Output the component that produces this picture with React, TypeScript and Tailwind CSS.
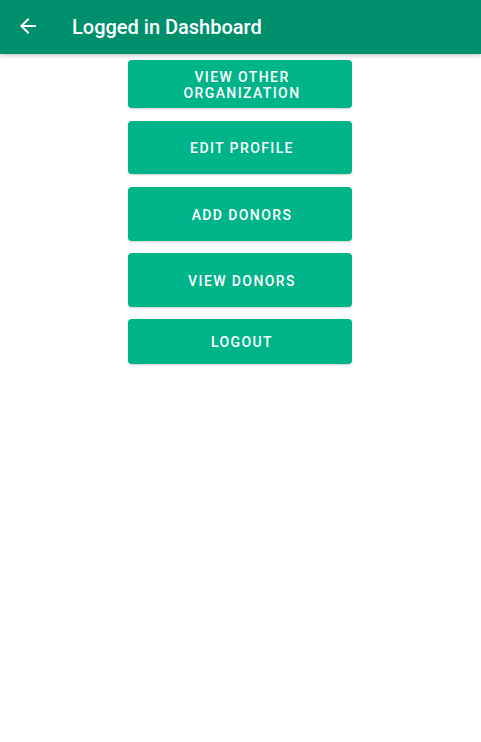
import React from 'react'

const buttons = [
  { label: 'View Other Organization', cls: 'h-[48px]' },
  { label: 'Edit Profile', cls: 'h-[53px] mt-[13px]' },
  { label: 'Add Donors', cls: 'h-[54px] mt-[13px]' },
  { label: 'View Donors', cls: 'h-[54px] mt-[12px]' },
  { label: 'Logout', cls: 'h-[45px] mt-[12px]' },
]

export default function App() {
  return (
    <div className="min-h-[742px] w-[481px] bg-white font-['Roboto',sans-serif]">
      {/* toolbar */}
      <div className="flex h-[54px] items-center bg-[#008f6d] shadow-[0_2px_4px_rgba(0,0,0,0.2)]">
        <div className="flex w-[56px] justify-center">
          <svg width="24" height="24" viewBox="0 0 24 24" className="mt-[-2px] fill-white">
            <path d="M20 11H7.83l5.59-5.59L12 4l-8 8 8 8 1.41-1.41L7.83 13H20v-2z" />
          </svg>
        </div>
        <h1 className="ml-[16px] mt-[-1px] text-[20px] font-medium text-white">Logged in Dashboard</h1>
      </div>

      <div className="mt-[6px] flex flex-col items-center pr-[1px]">
        {buttons.map((b) => (
          <button
            key={b.label}
            className={`${b.cls} w-[224px] rounded-[4px] bg-[#00b489] pl-[42px] pr-[38px] pt-[1px] text-[14px] font-medium uppercase leading-[16px] tracking-[0.1em] text-white shadow-[0_1px_2px_rgba(0,0,0,0.2)]`}
          >
            {b.label}
          </button>
        ))}
      </div>
    </div>
  )
}
